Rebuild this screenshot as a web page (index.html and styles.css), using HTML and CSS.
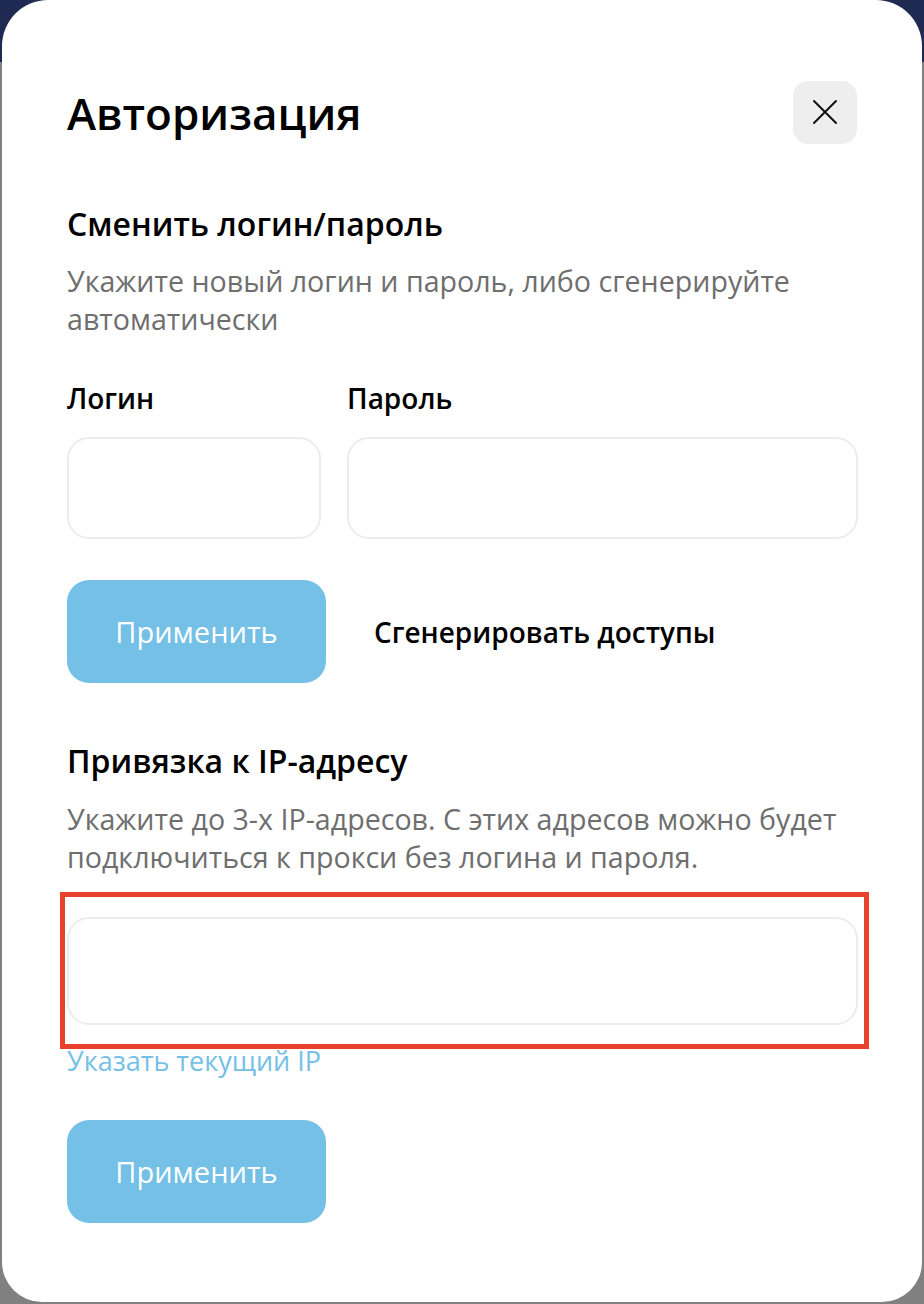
FILE: index.html
```html
<!DOCTYPE html>
<html lang="ru">
<head>
<meta charset="utf-8">
<title>Авторизация</title>
<link rel="stylesheet" href="styles.css">
</head>
<body>
<div class="backdrop">
  <div class="modal">
    <div class="modal-header">
      <h1 class="modal-title">Авторизация</h1>
      <button class="close-btn" type="button" aria-label="Закрыть">
        <svg width="26" height="26" viewBox="0 0 26 26" aria-hidden="true">
          <path d="M2 2 L24 24 M24 2 L2 24" stroke="#111" stroke-width="2" stroke-linecap="round" fill="none"/>
        </svg>
      </button>
    </div>

    <section class="section">
      <h2 class="section-title">Сменить логин/пароль</h2>
      <p class="section-desc">Укажите новый логин и пароль, либо сгенерируйте автоматически</p>
      <div class="creds">
        <div class="field">
          <label class="field-label">Логин</label>
          <div class="input"></div>
        </div>
        <div class="field">
          <label class="field-label">Пароль</label>
          <div class="input"></div>
        </div>
      </div>
      <div class="actions">
        <button class="btn-primary" type="button">Применить</button>
        <button class="btn-text" type="button">Сгенерировать доступы</button>
      </div>
    </section>

    <section class="section section-ip">
      <h2 class="section-title">Привязка к IP-адресу</h2>
      <p class="section-desc desc-ip">Укажите до 3-х IP-адресов. С этих адресов можно будет подключиться к прокси без логина и пароля.</p>
      <div class="ip-wrap">
        <div class="input input-ip"></div>
        <span class="highlight"></span>
      </div>
      <a class="link" href="#">Указать текущий IP</a>
      <div class="actions actions-ip">
        <button class="btn-primary" type="button">Применить</button>
      </div>
    </section>
  </div>
</div>
</body>
</html>
```

FILE: styles.css
```css
* { box-sizing: border-box; }

html, body {
  margin: 0;
  padding: 0;
}

body {
  font-family: "Open Sans", "Noto Sans", "DejaVu Sans", sans-serif;
  background: linear-gradient(to bottom, #1f2a52 0, #1f2a52 62px, #808080 62px, #808080 100%);
  width: 924px;
  height: 1304px;
  overflow: hidden;
}

.backdrop {
  padding-left: 2px;
}

.modal {
  width: 920px;
  height: 1302px;
  background: #ffffff;
  border-radius: 46px 46px 40px 40px;
  padding: 80px 64px 0 65px;
}

.modal-header {
  display: flex;
  justify-content: space-between;
  align-items: center;
  height: 64px;
}

.modal-title {
  margin: 0;
  font-size: 44px;
  line-height: 64px;
  font-weight: 600;
  color: #000;
  padding-top: 2px;
}

.close-btn {
  width: 64px;
  height: 63px;
  border: none;
  border-radius: 15px;
  background: #eeeeee;
  display: flex;
  align-items: center;
  justify-content: center;
  padding: 0;
  margin-right: 1px;
}

.section {
  margin-top: 60px;
}

.section-ip {
  margin-top: 58px;
}

.section-title {
  margin: 0;
  font-size: 32px;
  line-height: 40px;
  font-weight: 600;
  color: #000;
}

.section-desc {
  margin: 18px 0 0;
  font-size: 28.6px;
  line-height: 38px;
  font-weight: 400;
  color: #6e6e6e;
}

.desc-ip {
  margin-top: 19px;
}

.creds {
  display: grid;
  grid-template-columns: 254px 1fr;
  column-gap: 26px;
  margin-top: 42px;
}

.field {
  display: flex;
  flex-direction: column;
}

.field-label {
  font-size: 28px;
  line-height: 36px;
  font-weight: 600;
  color: #000;
  margin-bottom: 21px;
}

.input {
  height: 102px;
  border: 2px solid #ececec;
  border-radius: 22px;
  background: #fff;
}

.actions {
  display: flex;
  align-items: center;
  gap: 48px;
  margin-top: 41px;
}

.btn-primary {
  width: 259px;
  height: 103px;
  border: none;
  border-radius: 22px;
  background: #74c0e6;
  color: #ffffff;
  font-family: inherit;
  font-size: 29px;
  font-weight: 500;
  padding: 0;
}

.btn-text {
  border: none;
  background: none;
  padding: 0;
  font-family: inherit;
  font-size: 28px;
  font-weight: 600;
  color: #000;
}

.ip-wrap {
  position: relative;
  margin-top: 41px;
}

.input-ip {
  height: 108px;
}

.highlight {
  position: absolute;
  top: -25px;
  left: -7px;
  right: -11px;
  bottom: -24px;
  border: 5px solid #e8412c;
  pointer-events: none;
}

.link {
  display: block;
  margin-top: 18px;
  font-size: 27px;
  line-height: 36px;
  font-weight: 500;
  color: #74c0e6;
  text-decoration: none;
}

.actions-ip {
  margin-top: 41px;
}
```
